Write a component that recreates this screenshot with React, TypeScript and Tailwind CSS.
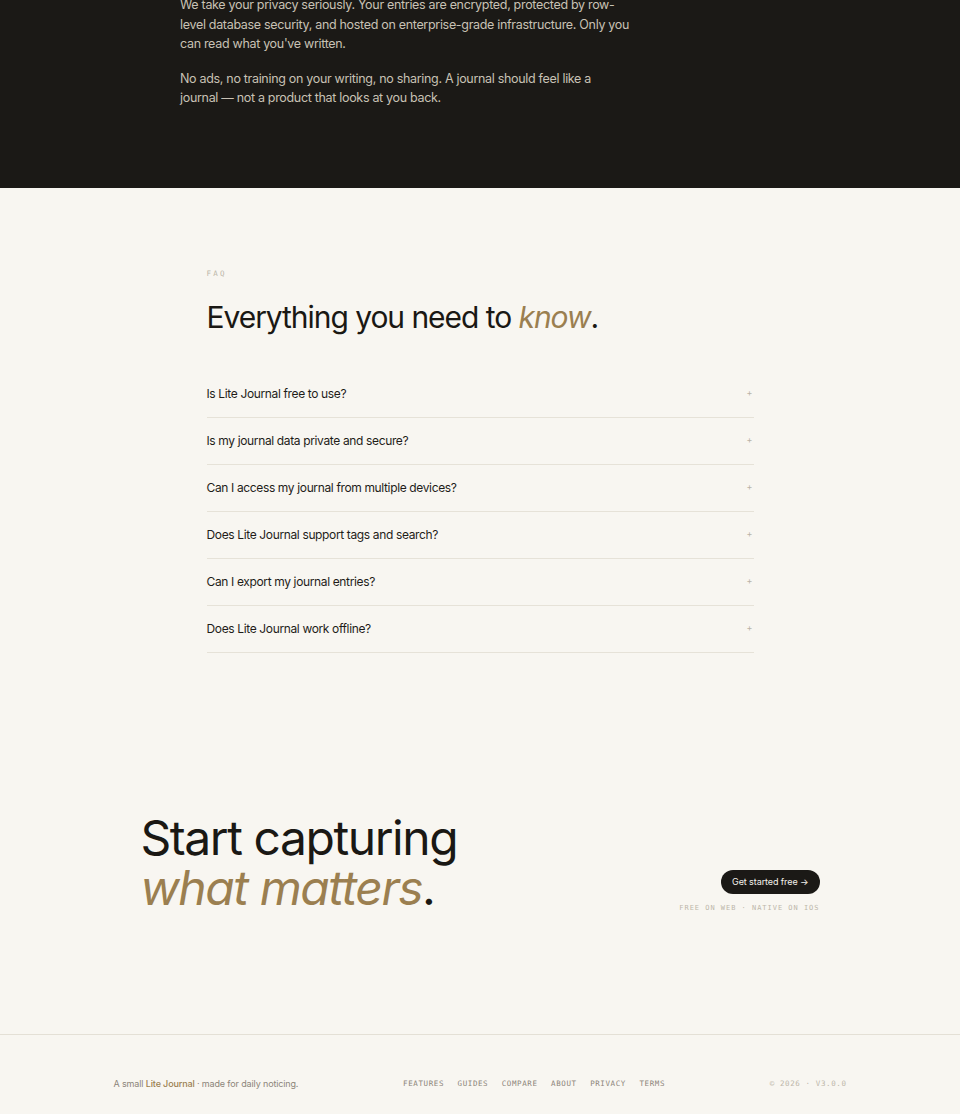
import React from "react";

const faqs = [
  "Is Lite Journal free to use?",
  "Is my journal data private and secure?",
  "Can I access my journal from multiple devices?",
  "Does Lite Journal support tags and search?",
  "Can I export my journal entries?",
  "Does Lite Journal work offline?",
];

const links = ["Features", "Guides", "Compare", "About", "Privacy", "Terms"];

const sans = "font-['Inter','Noto_Sans',sans-serif]";
const mono = "font-['DejaVu_Sans_Mono','Liberation_Mono',monospace]";

export default function App() {
  return (
    <div className={`${sans} bg-[#f8f6f1] text-[#1a1814] antialiased`}>
      {/* privacy note, dark band */}
      <section className="bg-[#1b1916] h-[188px] overflow-hidden">
        <div className="mx-auto w-[600px] -mt-[5px] text-[12.5px] leading-[19.6px] tracking-[-0.025em] text-[#c8c1b4]">
          <p className="max-w-[451px]">
            We take your privacy seriously. Your entries are encrypted, protected by row-level
            database security, and hosted on enterprise-grade infrastructure. Only you can read
            what you've written.
          </p>
          <p className="mt-[15px] max-w-[451px]">
            No ads, no training on your writing, no sharing. A journal should feel like a
            <br />
            journal — not a product that looks at you back.
          </p>
        </div>
      </section>

      {/* FAQ */}
      <section className="pt-[81px] pb-[121px]">
        <div className="mx-auto w-[547px]">
          <div className={`${mono} text-[7.5px] tracking-[0.3em] text-[#bdb6aa] leading-[10px]`}>FAQ</div>
          <h2 className="mt-[18px] text-[30px] leading-[40px] tracking-[-0.035em] font-normal">
            Everything you need to <em className="italic text-[#9b7f50]">know</em>.
          </h2>
          <div className="mt-[34px]">
            {faqs.map((q) => (
              <div
                key={q}
                className="flex h-[47px] items-center justify-between border-b border-[#e6e2d8] pb-px"
              >
                <span className="text-[12px] tracking-[-0.03em] text-[#1f1d19]">{q}</span>
                <span className="mr-[1px] -mt-[2px] text-[9px] leading-none text-[#bab3a7]">+</span>
              </div>
            ))}
          </div>
        </div>
      </section>

      {/* call to action */}
      <section className="pt-[39px] pb-[121px]">
        <div className="mx-auto flex w-[679px] items-end justify-between">
          <h2 className="text-[48px] leading-[50px] tracking-[-0.03em] font-normal">
            Start capturing
            <br />
            <em className="italic text-[#9b7f50]">what matters</em>.
          </h2>
          <div className="flex flex-col items-end">
            <button className="h-[24px] rounded-full bg-[#1b1916] px-[11px] text-[9px] tracking-[-0.01em] text-[#f4f1ea]">
              Get started free →
            </button>
            <div className={`${mono} mt-[10px] text-[7px] leading-[9px] tracking-[0.14em] text-[#bdb6aa]`}>
              FREE ON WEB · NATIVE ON IOS
            </div>
          </div>
        </div>
      </section>

      {/* footer */}
      <footer className="h-[81px] border-t border-[#e4e0d6] pt-[43px]">
        <div className="mx-auto flex w-[733px] items-center justify-between leading-[12px]">
          <div className="text-[9px] tracking-[-0.015em] text-[#8c857a]">
            A small <span className="font-medium text-[#9b7f50]">Lite Journal</span> · made for daily
            noticing.
          </div>
          <nav className={`${mono} flex gap-[13.5px] text-[7.5px] tracking-[0.08em] text-[#8c857a]`}>
            {links.map((l) => (
              <span key={l} className="uppercase">
                {l}
              </span>
            ))}
          </nav>
          <div className={`${mono} text-right text-[7.5px] tracking-[0.08em] text-[#bdb6aa]`}>
            © 2026 · V3.0.0
          </div>
        </div>
      </footer>
    </div>
  );
}
